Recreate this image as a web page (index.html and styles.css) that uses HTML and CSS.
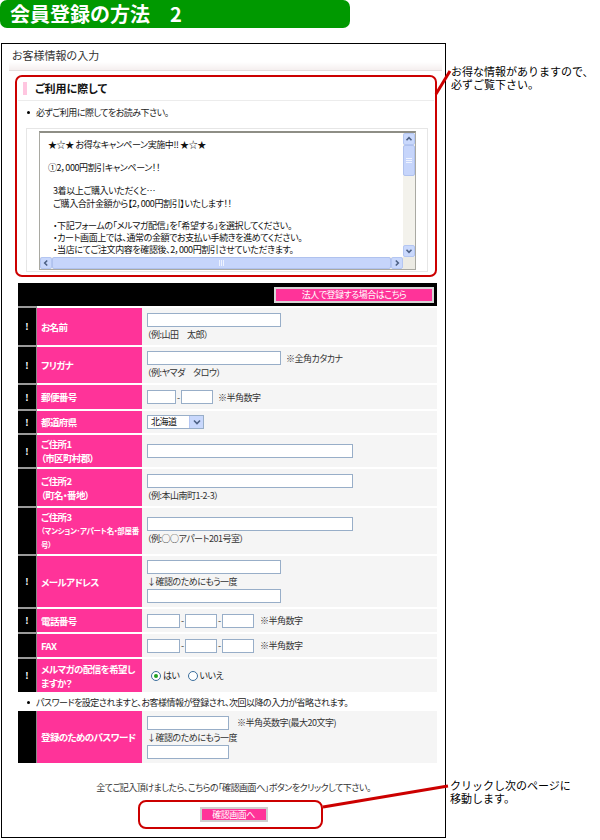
FILE: index.html
```html
<!DOCTYPE html>
<html lang="ja">
<head>
<meta charset="utf-8">
<title>会員登録の方法 2</title>
<link rel="stylesheet" href="styles.css">
</head>
<body>
<div class="page">
  <h1 class="title">会員登録の方法　2</h1>
  <div class="frame">
    <div class="pagehead">お客様情報の入力</div>
    <div class="band"></div>
    <section class="notice">
      <h2 class="notice-title"><span class="marker"></span>ご利用に際して</h2>
      <ul class="bullets"><li>必ずご利用に際してをお読み下さい。</li></ul>
      <div class="terms-wrap">
        <div class="terms">
          <div class="terms-text">
            <p>★☆★ お得なキャンペーン実施中!! ★☆★</p>
            <p class="blank"></p>
            <p>①2，000円割引キャンペーン！！</p>
            <p class="blank"></p>
            <p class="ind">3着以上ご購入いただくと…</p>
            <p class="ind">ご購入合計金額から【2，000円割引】いたします！！</p>
            <p class="blank short"></p>
            <p class="ind">・下記フォームの「メルマガ配信」を「希望する」を選択してください。</p>
            <p class="ind tight">・カート画面上では、通常の金額でお支払い手続きを進めてください。</p>
            <p class="ind tight">・当店にてご注文内容を確認後、2，000円割引させていただきます。</p>
          </div>
          <div class="vbar">
            <span class="sbtn"><svg viewBox="0 0 12 12" width="12" height="12"><path d="M3.5 7.2 L6 4.7 L8.5 7.2" fill="none" stroke="#4d6185" stroke-width="1.6"/></svg></span>
            <span class="vthumb"><i></i><i></i><i></i></span>
            <span class="vtrack"></span>
            <span class="sbtn"><svg viewBox="0 0 12 12" width="12" height="12"><path d="M3.5 4.8 L6 7.3 L8.5 4.8" fill="none" stroke="#4d6185" stroke-width="1.6"/></svg></span>
          </div>
          <div class="hbar">
            <span class="sbtn"><svg viewBox="0 0 12 12" width="12" height="12"><path d="M7.2 3.5 L4.7 6 L7.2 8.5" fill="none" stroke="#4d6185" stroke-width="1.6"/></svg></span>
            <span class="hthumb"><i></i><i></i><i></i></span>
            <span class="htrack"></span>
            <span class="sbtn"><svg viewBox="0 0 12 12" width="12" height="12"><path d="M4.8 3.5 L7.3 6 L4.8 8.5" fill="none" stroke="#4d6185" stroke-width="1.6"/></svg></span>
          </div>
          <div class="corner"></div>
        </div>
      </div>
    </section>

    <table class="form">
      <colgroup><col class="c-req"><col class="c-label"><col class="c-value"></colgroup>
      <tr class="head-row">
        <td colspan="3"><span class="corp-btn">法人で登録する場合はこちら</span></td>
      </tr>
      <tr class="h39">
        <td class="req">!</td>
        <td class="label">お名前</td>
        <td class="value">
          <span class="field w-mid"></span>
          <div class="hint">（例:山田　太郎）</div>
        </td>
      </tr>
      <tr class="h38">
        <td class="req">!</td>
        <td class="label">フリガナ</td>
        <td class="value">
          <div class="line"><span class="field w-mid"></span><span class="note">※全角カタカナ</span></div>
          <div class="hint">（例:ヤマダ　タロウ）</div>
        </td>
      </tr>
      <tr class="h26">
        <td class="req">!</td>
        <td class="label">郵便番号</td>
        <td class="value">
          <div class="line"><span class="field w-zip1"></span><span class="dash">-</span><span class="field w-zip2"></span><span class="note">※半角数字</span></div>
        </td>
      </tr>
      <tr class="h24">
        <td class="req">!</td>
        <td class="label">都道府県</td>
        <td class="value">
          <div class="select"><span class="select-text">北海道</span><span class="select-btn"><svg viewBox="0 0 14 12" width="14" height="12"><path d="M4 4.5 L7 7.5 L10 4.5" fill="none" stroke="#4d6185" stroke-width="1.6"/></svg></span></div>
        </td>
      </tr>
      <tr class="h34">
        <td class="req">!</td>
        <td class="label">ご住所1<br>（市区町村郡）</td>
        <td class="value"><span class="field w-long"></span></td>
      </tr>
      <tr class="h39">
        <td class="req"></td>
        <td class="label">ご住所2<br>（町名・番地）</td>
        <td class="value">
          <span class="field w-long"></span>
          <div class="hint">（例:本山南町1-2-3）</div>
        </td>
      </tr>
      <tr class="h48">
        <td class="req"></td>
        <td class="label">ご住所3<span class="small">（マンション･アパート名・部屋番<br>号）</span></td>
        <td class="value">
          <span class="field w-long"></span>
          <div class="hint">（例:○○アパート201号室）</div>
        </td>
      </tr>
      <tr class="h53">
        <td class="req">!</td>
        <td class="label">メールアドレス</td>
        <td class="value">
          <span class="field w-mid"></span>
          <div class="hint again">↓確認のためにもう一度</div>
          <span class="field w-mid"></span>
        </td>
      </tr>
      <tr class="h25">
        <td class="req">!</td>
        <td class="label">電話番号</td>
        <td class="value">
          <div class="line"><span class="field w-tel1"></span><span class="dash">-</span><span class="field w-tel2"></span><span class="dash">-</span><span class="field w-tel3"></span><span class="note tel">※半角数字</span></div>
        </td>
      </tr>
      <tr class="h25">
        <td class="req"></td>
        <td class="label">FAX</td>
        <td class="value">
          <div class="line"><span class="field w-tel1"></span><span class="dash">-</span><span class="field w-tel2"></span><span class="dash">-</span><span class="field w-tel3"></span><span class="note tel">※半角数字</span></div>
        </td>
      </tr>
      <tr class="h35">
        <td class="req">!</td>
        <td class="label">メルマガの配信を希望し<br>ますか？</td>
        <td class="value">
          <div class="radios">
            <span class="radio checked"></span><span class="rlabel">はい</span>
            <span class="radio"></span><span class="rlabel">いいえ</span>
          </div>
        </td>
      </tr>
    </table>

    <ul class="bullets b2"><li>パスワードを設定されますと、お客様情報が登録され、次回以降の入力が省略されます。</li></ul>

    <table class="form pw">
      <colgroup><col class="c-req"><col class="c-label"><col class="c-value"></colgroup>
      <tr class="h52">
        <td class="req"></td>
        <td class="label">登録のためのパスワード</td>
        <td class="value">
          <div class="line"><span class="field w-pw"></span><span class="note pwnote">※半角英数字(最大20文字)</span></div>
          <div class="hint again">↓確認のためにもう一度</div>
          <span class="field w-pw"></span>
        </td>
      </tr>
    </table>

    <p class="final">全てご記入頂けましたら、こちらの「確認画面へ」ボタンをクリックして下さい。</p>
    <div class="submit-box"><span class="submit-btn">確認画面へ</span></div>
  </div>

  <div class="callout c1">お得な情報がありますので、<br>必ずご覧下さい。</div>
  <div class="callout c2">クリックし次のページに<br>移動します。</div>
  <svg class="leaders" viewBox="0 0 600 840" width="600" height="840">
    <line x1="436" y1="94" x2="450" y2="71" stroke="#cc0000" stroke-width="3"/>
    <line x1="323" y1="807" x2="448" y2="786" stroke="#cc0000" stroke-width="3"/>
  </svg>
</div>
</body>
</html>
```

FILE: styles.css
```css
* { box-sizing: border-box; }

body {
  margin: 0;
  background: #fff;
  font-family: "Noto Sans CJK JP", "Noto Sans", sans-serif;
  color: #222;
}

.page {
  position: relative;
  width: 600px;
  height: 840px;
  overflow: hidden;
}

.title {
  margin: 0;
  width: 350px;
  height: 28px;
  background: #009900;
  border-radius: 7px;
  color: #fff;
  font-size: 20px;
  font-weight: 700;
  line-height: 28px;
  padding-left: 10px;
}

.frame {
  margin: 15px 0 0 1px;
  width: 445px;
  border: 1px solid #000;
  padding-bottom: 8px;
  font-size: 9px;
  letter-spacing: -0.5px;
  font-feature-settings: "palt";
}

.pagehead {
  height: 18px;
  padding: 5px 0 0 10px;
  font-size: 11px;
  line-height: 13px;
  letter-spacing: 0;
  color: #333;
}

.band {
  margin: 0 3px 0 7px;
  height: 9px;
  background: linear-gradient(#fff, #f5efef);
  border-bottom: 1px solid #e4dede;
}

/* notice (red framed) */
.notice {
  margin: 4px 0 0 13px;
  width: 422px;
  border: 2px solid #cc0000;
  border-radius: 7px;
  padding-bottom: 3px;
}

.notice-title {
  display: flex;
  align-items: center;
  margin: 0 1px;
  padding: 4px 0 4px 5px;
  border-bottom: 1px solid #ececec;
  font-size: 11px;
  line-height: 15px;
  font-weight: 700;
  letter-spacing: 0;
  color: #111;
}

.marker {
  width: 4px;
  height: 13px;
  background: #ffc6e0;
  margin-right: 8px;
}

.bullets {
  list-style: none;
  margin: 5px 0 0;
  padding: 0 0 0 10px;
}

.bullets li {
  display: flex;
  align-items: center;
  gap: 6px;
  line-height: 13px;
  color: #222;
}

.bullets li::before {
  content: "";
  width: 3px;
  height: 3px;
  border-radius: 50%;
  background: #000;
}

.terms-wrap {
  margin: 9px 0 0 9px;
  width: 402px;
  border: 1px solid #e6e6e6;
  padding: 2px 11px 1px 12px;
}

.terms {
  display: grid;
  grid-template-columns: 1fr 12px;
  grid-template-rows: 1fr 12px;
  height: 139px;
  border: 1px solid #a9a9a2;
  border-top: 2px solid #8e8e86;
  background: #fff;
}

.terms-text {
  overflow: hidden;
  padding: 5px 0 0 8px;
  line-height: 13px;
  letter-spacing: -0.4px;
  white-space: nowrap;
  color: #111;
}

.terms-text p { margin: 0; height: 13px; }
.terms-text p.blank { height: 10px; }
.terms-text p.blank.short { height: 9px; }
.terms-text p.ind { padding-left: 5px; }
.terms-text p.tight { height: 12px; line-height: 12px; }

.sbtn {
  display: block;
  width: 12px;
  height: 12px;
  background: #c9d8fc;
  border: 1px solid #b4c6f2;
  border-radius: 2px;
}

.sbtn svg { display: block; margin: -1px; }

.vbar {
  display: flex;
  flex-direction: column;
  background: #f3f2ec;
}

.vthumb {
  height: 31px;
  background: #c6d5fb;
  border: 1px solid #b0c2ee;
  border-radius: 2px;
  display: flex;
  flex-direction: column;
  align-items: center;
  justify-content: center;
  gap: 1px;
}

.vthumb i { display: block; width: 6px; height: 1px; background: #eef3ff; }

.vtrack { flex: 1; }

.hbar {
  display: flex;
  background: #f3f2ec;
}

.hthumb {
  width: 339px;
  background: #c6d5fb;
  border: 1px solid #b0c2ee;
  border-radius: 2px;
  display: flex;
  align-items: center;
  justify-content: center;
  gap: 1px;
}

.hthumb i { display: block; width: 1px; height: 6px; background: #eef3ff; }

.htrack { flex: 1; }

.corner { background: #ecebe4; }

/* form table */
.form {
  margin: 6px 0 0 16px;
  width: 419px;
  border-collapse: separate;
  border-spacing: 0;
  table-layout: fixed;
}

.c-req { width: 19px; }
.c-label { width: 105px; }
.c-value { width: 295px; }

.head-row td {
  background: #000;
  text-align: right;
  padding: 4px 3px 3px 0;
  height: 23px;
  line-height: 0;
}

.corp-btn {
  display: inline-flex;
  align-items: center;
  justify-content: center;
  width: 160px;
  height: 16px;
  background: #ff3399;
  border: 2px solid #d6d6d6;
  color: #fff;
  line-height: 12px;
  vertical-align: top;
}

.form tr + tr td { border-top: 2px solid #fff; }
.form tr + tr td.req { border-top-color: #9a9a9a; }

.h24 td { height: 24px; }
.h25 td { height: 25px; }
.h26 td { height: 26px; }
.h34 td { height: 34px; }
.h35 td { height: 35px; }
.h38 td { height: 38px; }
.h39 td { height: 39px; }
.h48 td { height: 48px; }
.h52 td { height: 52px; }
.h53 td { height: 53px; }

.req {
  background: #000;
  color: #fff;
  font-weight: 700;
  text-align: center;
  border-right: 1px solid #8a8a8a;
  vertical-align: middle;
  line-height: 13px;
  letter-spacing: 0;
  padding: 0;
}

.label {
  background: #ff3399;
  color: #fff;
  font-weight: 700;
  font-size: 9.5px;
  letter-spacing: -0.6px;
  line-height: 14px;
  padding: 0 2px 0 4px;
  vertical-align: middle;
  white-space: nowrap;
}

.label .small {
  display: block;
  font-size: 7.5px;
  letter-spacing: -0.3px;
  line-height: 14px;
}

.value {
  background: #f5f5f5;
  padding: 0 5px;
  vertical-align: middle;
  color: #333;
}

.field {
  display: block;
  height: 14px;
  background: #fff;
  border: 1px solid #98aec8;
}

.line {
  display: flex;
  align-items: center;
  height: 14px;
}

.line .field { flex: none; }

.w-mid { width: 134px; }
.w-long { width: 206px; }
.w-zip1 { width: 29px; }
.w-zip2 { width: 32px; }
.w-tel1 { width: 33px; }
.w-tel2 { width: 32px; }
.w-tel3 { width: 32px; }
.w-pw { width: 82px; }

.dash {
  width: 5px;
  text-align: center;
  line-height: 13px;
  letter-spacing: 0;
  color: #333;
}

.note {
  margin-left: 5px;
  line-height: 13px;
  white-space: nowrap;
}

.note.tel { margin-left: 6px; }
.pwnote { margin-left: 8px; }

.hint {
  line-height: 13px;
  margin-top: 1px;
  white-space: nowrap;
}

.hint.again { margin: 1px 0 1px; }

.select {
  display: flex;
  width: 57px;
  height: 14px;
  background: #fff;
  border: 1px solid #98aec8;
}

.select-text {
  flex: 1;
  padding-left: 3px;
  line-height: 12px;
  color: #111;
}

.select-btn {
  width: 14px;
  height: 12px;
  background: #c9d8fc;
  border-left: 1px solid #b4c6f2;
}

.select-btn svg { display: block; }

.radios {
  display: flex;
  align-items: center;
  padding-left: 4px;
}

.radio {
  width: 10px;
  height: 10px;
  border-radius: 50%;
  border: 1px solid #3b6e9c;
  background: #fff;
  display: flex;
  align-items: center;
  justify-content: center;
}

.radio.checked::after {
  content: "";
  width: 4px;
  height: 4px;
  border-radius: 50%;
  background: #21a121;
}

.rlabel {
  margin: 0 8px 0 2px;
  line-height: 13px;
  color: #222;
}

.b2 { margin: 4px 0 2px; padding-left: 25px; }

.form.pw { margin-top: 0; }

.final {
  margin: 18px 0 0 16px;
  width: 419px;
  padding-left: 12px;
  text-align: center;
  line-height: 13px;
  color: #333;
}

.submit-box {
  margin: 6px 0 0 136px;
  width: 185px;
  height: 29px;
  border: 2px solid #cc0000;
  border-radius: 8px;
  padding: 5px 0 0 6px;
  display: flex;
  justify-content: center;
  align-items: flex-start;
}

.submit-btn {
  display: flex;
  align-items: center;
  justify-content: center;
  width: 68px;
  height: 15px;
  background: #ff3399;
  border: 2px solid #cfcfcf;
  color: #fff;
  line-height: 11px;
}

/* callouts */
.callout {
  position: absolute;
  font-size: 11px;
  color: #000;
  white-space: nowrap;
}

.c1 { left: 451px; top: 65px; line-height: 13px; }
.c2 { left: 450px; top: 779px; line-height: 13px; }

.leaders {
  position: absolute;
  left: 0;
  top: 0;
  pointer-events: none;
}
```
